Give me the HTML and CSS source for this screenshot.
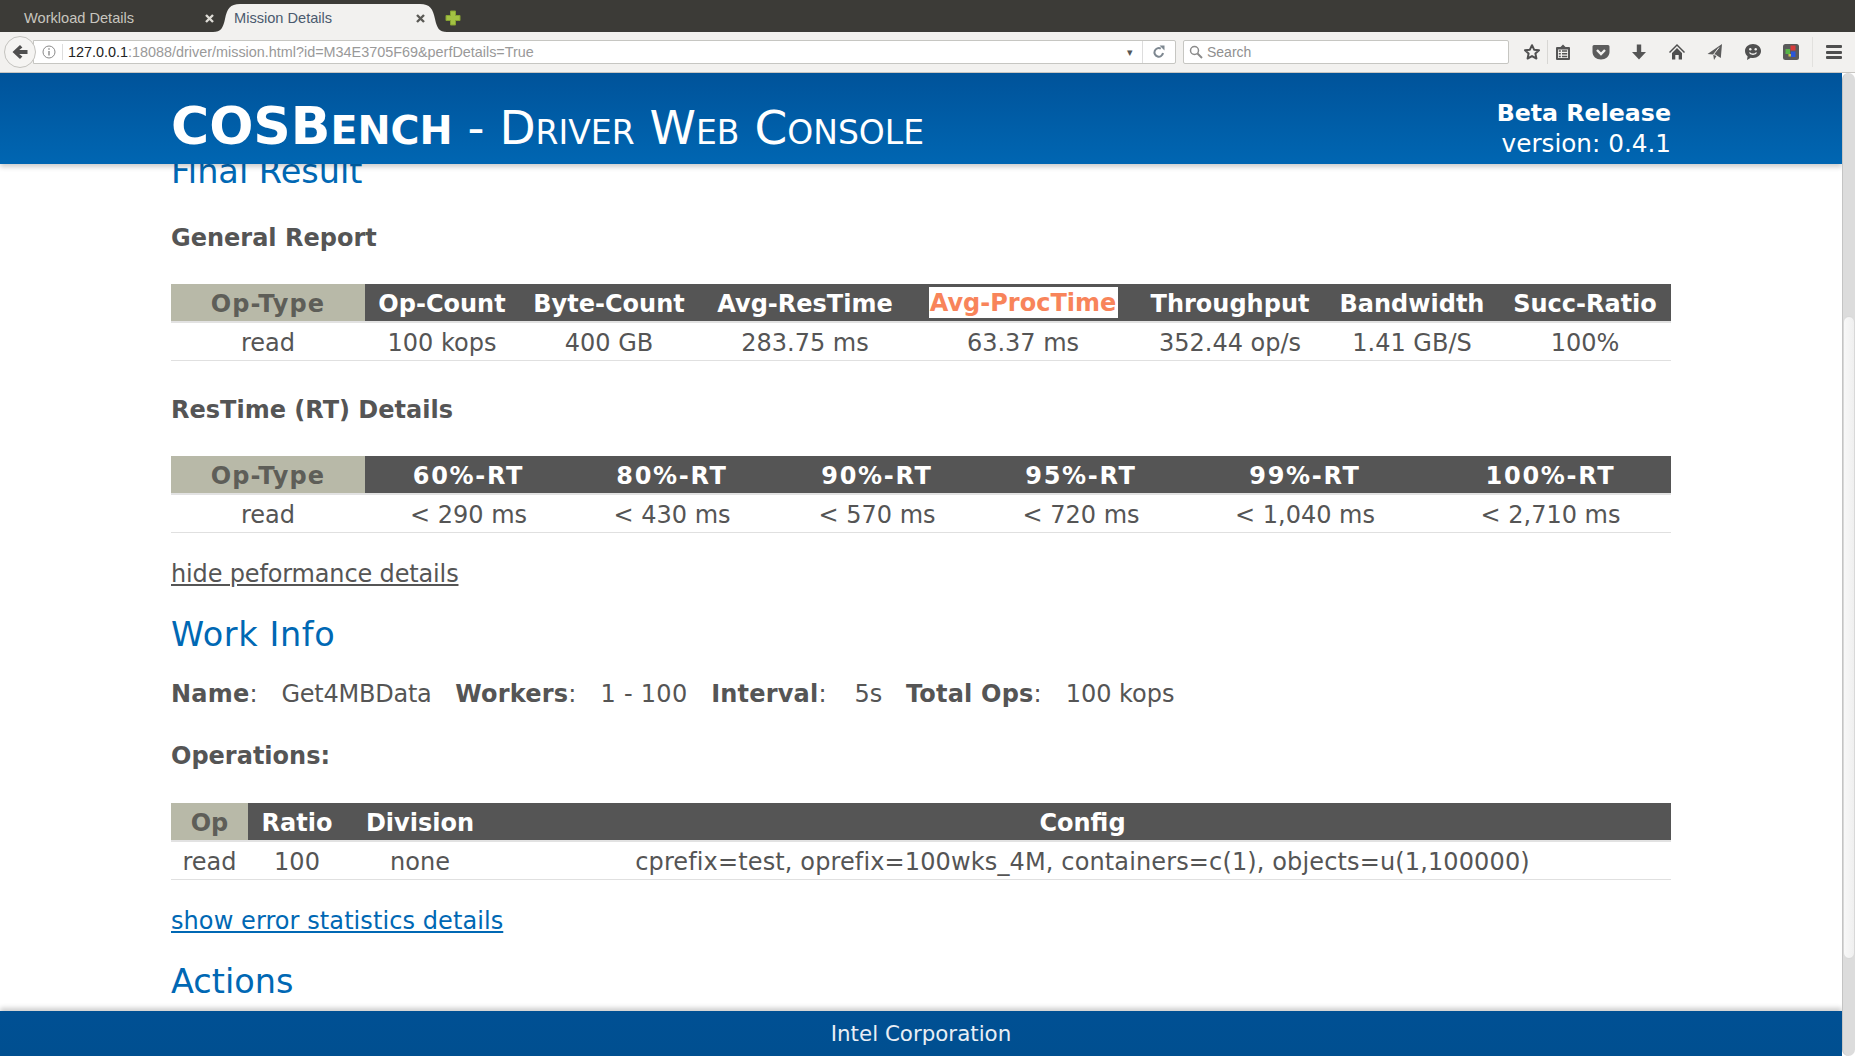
FILE: index.html
```html
<!DOCTYPE html>
<html lang="en">

<head>
    <meta charset="UTF-8">
    <title>Mission Details</title>
    <link rel="stylesheet" href="styles.css">
</head>

<body>
    <div class="tabbar">
        <div class="tab">
            <span class="tab-title">Workload Details</span>
            <svg class="tab-close" width="9" height="9" viewBox="0 0 9 9"><path d="M1 1l7 7M8 1L1 8" stroke="#dedcd6" stroke-width="2.400"/></svg>
        </div>
        <div class="tab tab-active">
            <svg class="tab-shape" width="234" height="28" viewBox="0 0 234 28"><path d="M0 28C8 28 10 24 12 15 14 5 17 0 27 0H207C217 0 220 5 222 15 224 24 226 28 234 28Z" fill="#f2f1ef"/></svg>
            <span class="tab-title">Mission Details</span>
            <svg class="tab-close" width="9" height="9" viewBox="0 0 9 9"><path d="M1 1l7 7M8 1L1 8" stroke="#5b5a56" stroke-width="2.400"/></svg>
        </div>
        <svg class="newtab" width="16" height="16" viewBox="0 0 16 16"><path d="M5.500 1h5v4.500H15v5h-4.500V15h-5v-4.500H1v-5h4.500z" fill="#a3c243" stroke="#86a232" stroke-width="1"/></svg>
    </div>

    <div class="toolbar">
        <div class="backbtn">
            <svg width="16" height="16" viewBox="0 0 16 16"><path d="M8 1l2.400 2.400L7.200 6H15.500v4H7.200l3.200 2.600L8 15 .5 8z" fill="#4f4f4f"/></svg>
        </div>
        <div class="urlbar">
            <svg class="infoicon" width="14" height="14" viewBox="0 0 14 14"><circle cx="7" cy="7" r="6" fill="none" stroke="#8a8a8a"/><path d="M6.300 6h1.400v4.500H6.300zM6.300 3.300h1.400v1.400H6.300z" fill="#8a8a8a"/></svg>
            <span class="url"><span class="url-host">127.0.0.1</span>:18088/driver/mission.html?id=M34E3705F69&amp;perfDetails=True</span>
            <span class="url-drop">&#9662;</span>
            <span class="url-reload">
                <svg width="14" height="14" viewBox="0 0 14 14"><path d="M11 8a4.300 4.300 0 1 1-2.200-4.400" fill="none" stroke="#7d8790" stroke-width="2"/><path d="M7.500 .5h5v5z" fill="#7d8790"/></svg>
            </span>
        </div>
        <div class="searchbar">
            <svg width="14" height="14" viewBox="0 0 14 14"><circle cx="5.500" cy="5.500" r="4" fill="none" stroke="#8b8b8b" stroke-width="1.500"/><path d="M8.500 8.500l4.500 4.500" stroke="#8b8b8b" stroke-width="2"/></svg>
            <span>Search</span>
        </div>
        <div class="tool-icons">
            <svg class="ico" width="18" height="18" viewBox="0 0 18 18"><path d="M9 2.200l2.100 4.500 4.900.6-3.600 3.300 1 4.900L9 13.100l-4.400 2.400 1-4.900L2 7.300l4.900-.6z" fill="none" stroke="#4f4f4f" stroke-width="2" stroke-linejoin="round"/></svg>
            <span class="tool-sep"></span>
            <svg class="ico" width="18" height="18" viewBox="0 0 18 18"><path d="M3 4h3.500L9 1.500 11.500 4H15a1 1 0 0 1 1 1v11a1 1 0 0 1-1 1H3a1 1 0 0 1-1-1V5a1 1 0 0 1 1-1z" fill="#555"/><path d="M4 6.500h10V15H4z" fill="#f2f1ef"/><path d="M4.800 7.300h2v1.500h-2zM8 7.300h5.200v1.500H8zM4.800 10h2v1.500h-2zM8 10h5.200v1.500H8zM4.800 12.700h2v1.500h-2zM8 12.700h5.200v1.500H8z" fill="#555"/></svg>
            <svg class="ico ico-next" width="18" height="18" viewBox="0 0 18 18"><path d="M2 2h14a1.500 1.500 0 0 1 1.500 1.500V9c0 4.500-3.800 7.500-8.500 7.500S.5 13.500.5 9V3.500A1.500 1.500 0 0 1 2 2z" fill="#5c5c5c"/><path d="M5 7l4 4 4-4" fill="none" stroke="#f2f1ef" stroke-width="2.400"/></svg>
            <svg class="ico ico-next" width="18" height="18" viewBox="0 0 18 18"><path d="M6.800 1.500h4.400V9H16l-7 7.500L2 9h4.800z" fill="#555"/></svg>
            <svg class="ico ico-next" width="18" height="18" viewBox="0 0 18 18"><path d="M9 1l8 8-1 1-7-7-7 7-1-1z" fill="#4f4f4f"/><path d="M9 5l5 5v6.500h-3.300V12H7.300v4.500H4V10z" fill="#4f4f4f"/></svg>
            <svg class="ico ico-next" width="18" height="18" viewBox="0 0 18 18"><path d="M16 1l-1.200 14-4-2.500L8 17l-.8-5.500L1.500 11z" fill="#5c5c5c"/><path d="M13 4.500l-5.500 7 3.300 1" fill="none" stroke="#f2f1ef" stroke-width="1"/></svg>
            <svg class="ico ico-next" width="18" height="18" viewBox="0 0 18 18"><path d="M9 1c4.500 0 8 3 8 7s-3.500 7-8 7c-.8 0-1.500-.1-2.200-.3L3 17l.6-3.800C2 12 1 10.100 1 8c0-4 3.500-7 8-7z" fill="#505050"/><circle cx="6.300" cy="6.300" r="1.200" fill="#f2f1ef"/><circle cx="11.700" cy="6.300" r="1.200" fill="#f2f1ef"/><path d="M5.500 9.500c1 2.300 6 2.300 7 0" fill="none" stroke="#f2f1ef" stroke-width="1.300"/></svg>
            <svg class="ico ico-next" width="18" height="18" viewBox="0 0 18 18"><rect x="1" y="1" width="16" height="16" rx="2.500" fill="#5a5a5a"/><rect x="3.500" y="6" width="4.500" height="5" fill="#58b548"/><rect x="8.500" y="2.500" width="5" height="5" fill="#d83a3a"/><rect x="9" y="8.500" width="4.500" height="5.500" fill="#2a55d8"/><rect x="6.500" y="11" width="2.500" height="2.500" fill="#c9c14a"/></svg>
        </div>
        <div class="menubtn">
            <span></span><span></span><span></span>
        </div>
    </div>

    <div class="viewport">
        <div class="page">
            <header class="site-header">
                <div class="brand"><b>COSB<span class="brand-small">ENCH</span></b> - Driver Web Console</div>
                <div class="release">
                    <div class="release-name">Beta Release</div>
                    <div class="release-version">version: 0.4.1</div>
                </div>
            </header>

            <main class="content">
                <h2 class="section-title first">Final Result</h2>

                <h3 class="sub-title first-sub">General Report</h3>
                <table class="info-table">
                    <colgroup>
                        <col style="width:194px"><col style="width:154px"><col style="width:180px"><col style="width:212px"><col style="width:224px"><col style="width:190px"><col style="width:174px"><col style="width:172px">
                    </colgroup>
                    <tr>
                        <th class="key key-wide">Op-Type</th>
                        <th>Op-Count</th>
                        <th>Byte-Count</th>
                        <th>Avg-ResTime</th>
                        <th><span class="highlight">Avg-ProcTime</span></th>
                        <th>Throughput</th>
                        <th>Bandwidth</th>
                        <th>Succ-Ratio</th>
                    </tr>
                    <tr>
                        <td>read</td>
                        <td>100 kops</td>
                        <td>400 GB</td>
                        <td>283.75 ms</td>
                        <td>63.37 ms</td>
                        <td>352.44 op/s</td>
                        <td>1.41 GB/S</td>
                        <td>100%</td>
                    </tr>
                </table>

                <h3 class="sub-title">ResTime (RT) Details</h3>
                <table class="info-table rt-table">
                    <colgroup>
                        <col style="width:194px"><col style="width:207px"><col style="width:200px"><col style="width:210px"><col style="width:198px"><col style="width:250px"><col style="width:241px">
                    </colgroup>
                    <tr>
                        <th class="key key-wide">Op-Type</th>
                        <th>60%-RT</th>
                        <th>80%-RT</th>
                        <th>90%-RT</th>
                        <th>95%-RT</th>
                        <th>99%-RT</th>
                        <th>100%-RT</th>
                    </tr>
                    <tr>
                        <td>read</td>
                        <td>&lt; 290 ms</td>
                        <td>&lt; 430 ms</td>
                        <td>&lt; 570 ms</td>
                        <td>&lt; 720 ms</td>
                        <td>&lt; 1,040 ms</td>
                        <td>&lt; 2,710 ms</td>
                    </tr>
                </table>

                <p class="link-row"><a class="link-dark" href="#">hide peformance details</a></p>

                <h2 class="section-title work-title">Work Info</h2>
                <p class="work-row">
                    <b>Name</b>:<span class="work-val val-name">Get4MBData</span>
                    <b>Workers</b>:<span class="work-val val-workers">1 - 100</span>
                    <b>Interval</b>:<span class="work-val val-interval">5s</span>
                    <b>Total Ops</b>:<span class="work-val">100 kops</span>
                </p>

                <h3 class="sub-title ops-title">Operations:</h3>
                <table class="info-table">
                    <colgroup>
                        <col style="width:77px"><col style="width:98px"><col style="width:148px"><col style="width:1177px">
                    </colgroup>
                    <tr>
                        <th class="key">Op</th>
                        <th>Ratio</th>
                        <th>Division</th>
                        <th>Config</th>
                    </tr>
                    <tr>
                        <td>read</td>
                        <td>100</td>
                        <td>none</td>
                        <td class="config-cell">cprefix=test, oprefix=100wks_4M, containers=c(1), objects=u(1,100000)</td>
                    </tr>
                </table>

                <p class="link-row"><a class="link-blue" href="#">show error statistics details</a></p>

                <h2 class="section-title">Actions</h2>
            </main>

            <footer class="site-footer">Intel Corporation</footer>
        </div>
        <div class="scrollbar">
            <div class="scroll-thumb"></div>
        </div>
    </div>
</body>

</html>
```

FILE: styles.css
```css
* {
    box-sizing: border-box;
}

html, body {
    margin: 0;
    height: 100%;
    overflow: hidden;
}

body {
    display: flex;
    flex-direction: column;
    font-family: "DejaVu Sans", sans-serif;
    color: #555;
    background: #fff;
}

/* browser chrome */
.tabbar {
    height: 32px;
    flex: none;
    display: flex;
    align-items: flex-end;
    background: #3c3b37;
    padding-left: 8px;
    font-family: "Liberation Sans", sans-serif;
    font-size: 14.600px;
}

.tab {
    width: 205px;
    height: 28px;
    display: flex;
    align-items: center;
    justify-content: space-between;
    padding: 0 0 0 16px;
    color: #c8c6bf;
}

.tab-active {
    width: 234px;
    padding: 0 23px 0 21px;
    position: relative;
    color: #4a5a6e;
}

.tab-shape {
    position: absolute;
    left: 0;
    top: 0;
}

.tab-title, .tab-close {
    position: relative;
}

.tab-close {
    margin-right: -1px;
}

.newtab {
    margin: 0 0 6px -2px;
}

.toolbar {
    height: 41px;
    flex: none;
    display: flex;
    align-items: center;
    background: #f2f1ef;
    border-bottom: 1px solid #c8c6c2;
    padding-left: 4px;
    font-family: "Liberation Sans", sans-serif;
    font-size: 14.400px;
}

.backbtn {
    width: 32px;
    height: 32px;
    flex: none;
    display: flex;
    align-items: center;
    justify-content: center;
    background: #f5f4f2;
    border: 1px solid #c4c3bf;
    border-radius: 50%;
    position: relative;
    z-index: 1;
}

.urlbar {
    width: 1143px;
    height: 24px;
    flex: none;
    margin-left: -3px;
    display: flex;
    align-items: center;
    background: #fff;
    border: 1px solid #c6c6c2;
    border-radius: 0 2px 2px 0;
    padding-left: 8px;
}

.infoicon {
    flex: none;
}

.url {
    flex: 1;
    margin-left: 6px;
    padding-left: 5px;
    border-left: 1px solid #ddd;
    color: #999;
}

.url-host {
    color: #222;
}

.url-drop {
    font-size: 11px;
    color: #555;
    margin-right: 9px;
}

.url-reload {
    width: 33px;
    height: 22px;
    display: flex;
    align-items: center;
    justify-content: center;
    border-left: 1px solid #ddd;
}

.searchbar {
    width: 326px;
    height: 24px;
    flex: none;
    margin-left: 7px;
    display: flex;
    align-items: center;
    gap: 4px;
    padding-left: 5px;
    background: #fff;
    border: 1px solid #c6c6c2;
    border-radius: 2px;
    color: #8f8f8f;
    font-size: 14px;
}

.tool-icons {
    flex: none;
    display: flex;
    align-items: center;
    margin-left: 14px;
}

.ico {
    display: block;
    flex: none;
}

.ico-next {
    margin-left: 20px;
}

.tool-sep {
    width: 1px;
    height: 24px;
    margin: 0 6px;
    background: #d8d7d4;
}

.menubtn {
    width: 43px;
    height: 30px;
    flex: none;
    margin-left: 12px;
    display: flex;
    flex-direction: column;
    justify-content: center;
    align-items: center;
    gap: 2.500px;
    border-left: 1px solid #e2e1de;
}

.menubtn span {
    width: 16px;
    height: 3px;
    border-radius: 1px;
    background: #4f4f4f;
}

/* page */
.viewport {
    flex: 1;
    min-height: 0;
    display: flex;
}

.page {
    flex: 1;
    position: relative;
    overflow: hidden;
}

.scrollbar {
    width: 13px;
    flex: none;
    background: #dcdcdc;
    border-left: 1px solid #c4c4c4;
    border-radius: 7px;
    padding-top: 243px;
}

.scroll-thumb {
    height: 643px;
    border-radius: 7px;
    background: linear-gradient(to right, #f8f8f8, #efefef);
    border: 1px solid #d8d8d8;
}

.site-header {
    position: absolute;
    top: 0;
    left: 0;
    right: 0;
    height: 91px;
    z-index: 2;
    display: flex;
    justify-content: space-between;
    padding: 0 171px;
    color: #fff;
    background: linear-gradient(to bottom, #00539a, #0066b2);
    box-shadow: 0 3px 5px rgba(0, 0, 0, 0.2);
}

.brand {
    padding-top: 8px;
    font-size: 47px;
    line-height: 91px;
    font-variant: small-caps;
    white-space: nowrap;
}

.brand b {
    font-size: 52px;
    font-variant: normal;
}

.brand-small {
    font-size: 39.500px;
}

.release {
    padding-top: 25px;
    text-align: right;
    line-height: 30px;
}

.release-name {
    font-size: 23.700px;
    font-weight: bold;
}

.release-version {
    margin-top: 1px;
    font-size: 24.700px;
}

.site-footer {
    position: absolute;
    left: 0;
    right: 0;
    bottom: 0;
    height: 45px;
    z-index: 2;
    text-align: center;
    font-size: 21.400px;
    line-height: 45px;
    color: #e8eef5;
    background: linear-gradient(to bottom, #005094, #004f90);
    box-shadow: 0 -3px 5px rgba(0, 0, 0, 0.2);
}

.content {
    width: 1500px;
    margin-left: 171px;
    font-size: 24px;
}

.section-title {
    margin: 26px 0 0;
    font-size: 33.500px;
    font-weight: normal;
    line-height: 40px;
    color: #0068b4;
}

.section-title.first {
    margin-top: 79px;
}

.work-title {
    letter-spacing: 0.600px;
}

.sub-title {
    margin: 0;
    font-size: 24px;
    font-weight: bold;
    line-height: 30px;
    padding-top: 34px;
    padding-bottom: 31px;
}

.sub-title.first-sub {
    padding-top: 31px;
}

.sub-title.ops-title {
    padding-top: 32px;
    padding-bottom: 32px;
}

.info-table {
    width: 1500px;
    table-layout: fixed;
    border-collapse: separate;
    border-spacing: 0;
}

.info-table th {
    height: 39px;
    padding: 2px 0 0;
    background: #555;
    color: #fff;
    font-weight: bold;
    border-bottom: 2px solid #e2e2e2;
    line-height: 30px;
}

.info-table th.key {
    background: #b8b9a8;
    color: #5e5e58;
}

.info-table th.key-wide {
    letter-spacing: 1.100px;
}

.rt-table th {
    letter-spacing: 1.700px;
}

.info-table td {
    height: 38px;
    padding: 2px 0 0;
    text-align: center;
    line-height: 30px;
    border-bottom: 1px solid #e0e0e0;
}

.info-table td.config-cell {
    letter-spacing: 0.130px;
}

.highlight {
    display: block;
    width: 189px;
    height: 31px;
    line-height: 33px;
    margin: -2px auto 0;
    background: #fff;
    color: #f8845a;
}

.link-row {
    margin: 0;
    padding-top: 26px;
    line-height: 30px;
}

.link-dark {
    color: #555;
    letter-spacing: -0.150px;
}

.link-blue {
    color: #0068b4;
    letter-spacing: 0.080px;
}

.work-row {
    margin: 0;
    padding-top: 24px;
    line-height: 30px;
}

.work-row b {
    letter-spacing: 0.200px;
}

.work-val {
    margin: 0 16px 0 24px;
}

.val-name {
    letter-spacing: -0.240px;
}

.val-workers {
    letter-spacing: 0.300px;
}

.val-interval {
    margin-left: 28px;
}
```
